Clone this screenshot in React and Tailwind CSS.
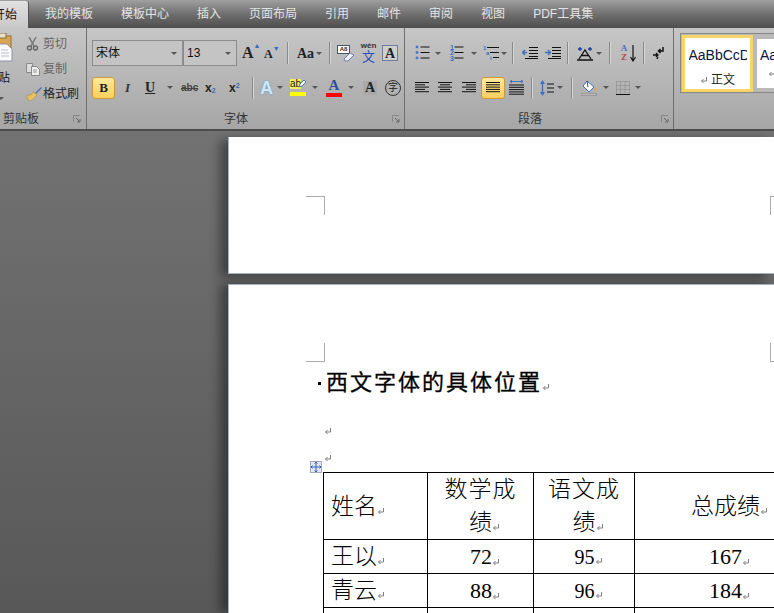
import React from "react";

const Arrow = () => <span className="inline-block w-0 h-0 border-x-[3px] border-x-transparent border-t-[3px] border-t-[#555]" />;
const Sep = ({ className = "" }) => <span className={`w-px h-[22px] bg-[#8a8a8a] border-r border-[#d5d5d5] box-content ${className}`} />;
const Launcher = () => (
  <svg width="8" height="8" viewBox="0 0 8 8" className="shrink-0"><path d="M.5 7V.5H7" fill="none" stroke="#888" /><path d="M3 3l4 4M7 4v3H4" fill="none" stroke="#666" /></svg>
);
const Ret = ({ className = "" }) => (
  <svg width="8" height="8" viewBox="0 0 8 8" className={`inline-block shrink-0 ${className}`}><path d="M6.5 1v4H1.5M3.500 3L1.500 5l2 2" fill="none" stroke="#808080" strokeWidth="1" /></svg>
);
const Lines = ({ kind = "left" }) => {
  const rows = {
    left: [14, 10, 14, 10, 14],
    center: [14, 10, 14, 10, 14],
    right: [14, 10, 14, 10, 14],
    just: [14, 14, 14, 14, 14],
  }[kind];
  return (
    <svg width="14" height="11" viewBox="0 0 14 11">
      {rows.map((w, i) => {
        const x = kind === "center" ? (14 - w) / 2 : kind === "right" ? 14 - w : 0;
        return <rect key={i} x={x} y={i * 2.3} width={w} height="1" fill="#111" />;
      })}
    </svg>
  );
};
const ListIcon = ({ marks }) => (
  <svg width="15" height="16" viewBox="0 0 15 16">
    {[2, 7.5, 13].map((y, i) => (
      <g key={i}>
        {marks === "dot" ? (
          <circle cx="2" cy={y} r="1.4" fill="#4a76c0" />
        ) : (
          <text x="1" y={y + 2.5} fontSize="7" fontWeight="700" fontFamily="Liberation Sans" fill="#3f6fc0">{i + 1}</text>
        )}
        <rect x="5.500" y={y - 0.5} width="9" height="1" fill="#111" />
      </g>
    ))}
  </svg>
);
const MultiIcon = () => (
  <svg width="16" height="16" viewBox="0 0 16 16">
    <text x="0" y="5" fontSize="6" fontWeight="700" fontFamily="Liberation Sans" fill="#3f6fc0">1</text>
    <rect x="4" y="2" width="12" height="1" fill="#111" />
    <text x="3" y="10" fontSize="6" fontWeight="700" fontFamily="Liberation Sans" fill="#3f6fc0">a</text>
    <rect x="7" y="7" width="9" height="1" fill="#111" />
    <text x="7" y="15" fontSize="6" fontWeight="700" fontFamily="Liberation Sans" fill="#3f6fc0">i</text>
    <rect x="10" y="12" width="6" height="1" fill="#111" />
  </svg>
);

const GroupLabel = ({ label, pad, justify }) => (
  <div className={`mt-auto h-[21px] flex items-center ${justify} ${pad} text-[12px] leading-none text-[#333]`}>
    <span>{label}</span>
    <Launcher />
  </div>
);

function Clipboard() {
  return (
    <section className="w-[87px] shrink-0 border-r border-[#6f6f6f] flex flex-col">
      <div className="flex h-[80px]">
        <div className="w-[23px] shrink-0 overflow-hidden flex flex-col">
          <svg width="13" height="30" viewBox="0 0 13 30" className="mt-[5px] shrink-0">
            <rect x="-6" y="3" width="17" height="22" fill="#d9a653" stroke="#9a6f30" />
            <rect x="-4" y="0" width="10" height="5" fill="#e8e0c8" stroke="#85703f" />
            <path d="M-3 11H7l5 5v12H-3z" fill="#fbfbfb" stroke="#8a93a8" />
            <path d="M1 17h7M1 20h8M1 23h8" stroke="#b8bcc8" />
          </svg>
          <span className="text-[12px] leading-[16px] mt-[7px] ml-[-2px] text-[#111]">贴</span>
          <span className="mt-[9px] ml-[-2px] leading-[0]"><Arrow /></span>
        </div>
        <div className="flex flex-col pt-[5px] gap-[4px] ml-[3px]">
          <div className="flex items-center h-[21px]">
            <svg width="13" height="14" viewBox="0 0 13 14"><path d="M3 0l5 9M10 0L5 9" stroke="#777" strokeWidth="1.5" /><circle cx="3.500" cy="11" r="2" fill="none" stroke="#666" strokeWidth="1.4" /><circle cx="9.500" cy="11" r="2" fill="none" stroke="#666" strokeWidth="1.4" /></svg>
            <span className="ml-[4px] text-[12px] text-[#666]">剪切</span>
          </div>
          <div className="flex items-center h-[21px]">
            <svg width="14" height="14" viewBox="0 0 14 14"><path d="M.5 1.500h6v9h-6z" fill="#ddd" stroke="#888" /><path d="M5.500 4.500h5l3 3v6h-8z" fill="#eee" stroke="#888" /><path d="M7 8h4M7 10h4" stroke="#999" /></svg>
            <span className="ml-[3px] text-[12px] text-[#666]">复制</span>
          </div>
          <div className="flex items-center h-[21px]">
            <svg width="16" height="14" viewBox="0 0 16 14"><path d="M9 6l6-6 1 1-6 6z" fill="#5570a8" /><path d="M1 8c3 1 5-1 7-3l3 3c-2 3-5 5-7 6-1 0-1-1-1-1-1 0-1-1-1-1-1 0-1-2-1-4z" fill="#e8c060" stroke="#a08030" strokeWidth=".5" /></svg>
            <span className="ml-[1px] text-[12px] text-[#222]">格式刷</span>
          </div>
        </div>
      </div>
      <GroupLabel label="剪贴板" justify="justify-between" pad="pl-[3px] pr-[5px]" />
    </section>
  );
}

function FontGroup() {
  return (
    <section className="w-[318px] shrink-0 border-r border-[#6f6f6f] flex flex-col">
      <div className="flex items-center h-[26px] mt-[12px] pl-[5px]">
        <div className="w-[91px] h-[26px] border border-[#8c8c8c] bg-[#c4c4c4] flex items-center justify-between pl-[3px] pr-[5px] text-[12px] text-[#111]">
          <span>宋体</span><Arrow />
        </div>
        <div className="w-[54px] h-[26px] border border-[#8c8c8c] bg-[#c4c4c4] flex items-center justify-between pl-[3px] pr-[5px] text-[12px] text-[#111] font-['Liberation_Sans']">
          <span>13</span><Arrow />
        </div>
        <span className="ml-[5px] w-[18px] font-['Liberation_Serif'] font-bold text-[16px] text-[#222] flex items-start">A<span className="text-[7px] text-[#3b6cb5] leading-[10px]">▲</span></span>
        <span className="ml-[4px] w-[18px] font-['Liberation_Serif'] font-bold text-[12px] text-[#222] flex items-start pt-[2px]">A<span className="text-[7px] text-[#3b6cb5] leading-[8px]">▼</span></span>
        <Sep className="ml-[5px]" />
        <span className="ml-[8px] w-[26px] font-['Liberation_Serif'] font-bold text-[14px] text-[#222] flex items-center gap-[2px]">Aa<Arrow /></span>
        <Sep className="ml-[6px]" />
        <div className="ml-[6px] w-[18px] h-[17px] relative">
          <span className="block w-[13px] h-[9px] bg-white border border-[#456] font-['Liberation_Sans'] font-bold text-[6px] leading-[7px] text-center text-[#234]">A8</span>
          <svg width="12" height="10" viewBox="0 0 12 10" className="absolute right-0 bottom-0"><path d="M1 7l6-6 4 2-6 6H2z" fill="#f0f0f8" stroke="#6a7fb0" /></svg>
        </div>
        <div className="ml-[5px] w-[17px] flex flex-col items-center leading-none">
          <span className="font-['Liberation_Sans'] font-bold text-[8px] h-[8px] text-[#333]">wén</span>
          <span className="text-[13px] text-[#2f4fb5] leading-[14px]">文</span>
        </div>
        <span className="ml-[5px] w-[16px] h-[16px] border border-[#6a7f9f] bg-[#cfcfcf] flex items-center justify-center font-['Liberation_Serif'] font-bold text-[14px] text-[#222]">A</span>
      </div>
      <div className="flex items-center h-[23px] mt-[10px] pl-[5px]">
        <span className="w-[23px] h-[22px] rounded-[3px] border border-[#c99a3a] bg-gradient-to-b from-[#fde89a] to-[#fbcf5c] flex items-center justify-center font-['Liberation_Serif'] font-bold text-[13px] text-[#222]">B</span>
        <span className="ml-[10px] w-[10px] font-['Liberation_Serif'] italic font-bold text-[13px] text-[#333]">I</span>
        <span className="ml-[10px] w-[14px] font-['Liberation_Serif'] font-bold underline text-[14px] text-[#222]">U</span>
        <span className="ml-[8px] flex"><Arrow /></span>
        <span className="ml-[8px] w-[17px] font-['Liberation_Sans'] font-bold line-through text-[10px] text-[#444]">abc</span>
        <span className="ml-[7px] w-[14px] font-['Liberation_Sans'] font-bold text-[12px] text-[#222]">x<sub className="text-[7px] text-[#3b6cb5]">2</sub></span>
        <span className="ml-[10px] w-[14px] font-['Liberation_Sans'] font-bold text-[12px] text-[#222]">x<sup className="text-[7px] text-[#3b6cb5]">2</sup></span>
        <Sep className="ml-[9px]" />
        <span className="ml-[6px] w-[17px] font-['Liberation_Sans'] font-bold text-[18px] leading-none text-[#cfe6f7] [text-shadow:0_0_2px_#5aa0d8]">A</span>
        <span className="flex"><Arrow /></span>
        <div className="ml-[7px] w-[16px] flex flex-col relative">
          <span className="font-['Liberation_Sans'] text-[10px] leading-[10px] w-[11px] bg-[#f4ee60] text-[#222]">ab</span>
          <svg width="8" height="9" viewBox="0 0 8 9" className="absolute right-0 top-0"><path d="M1 8l1-3 4-4 2 2-4 4z" fill="#f2f2fa" stroke="#5d74a8" /></svg>
          <span className="mt-[3px] h-[4px] bg-[#ffff00]" />
        </div>
        <span className="ml-[6px] flex"><Arrow /></span>
        <div className="ml-[8px] w-[16px] flex flex-col items-center">
          <span className="font-['Liberation_Serif'] font-bold text-[15px] leading-[13px] text-[#34509a]">A</span>
          <span className="mt-[1px] w-full h-[4px] bg-[#ff0000]" />
        </div>
        <span className="ml-[6px] flex"><Arrow /></span>
        <span className="ml-[9px] w-[14px] h-[14px] bg-[#aaa] flex items-center justify-center font-['Liberation_Serif'] font-bold text-[14px] text-[#222]">A</span>
        <span className="ml-[8px] w-[16px] h-[16px] rounded-full border border-[#333] flex items-center justify-center text-[10px] leading-none text-[#222]">字</span>
      </div>
      <GroupLabel label="字体" justify="justify-between" pad="pl-[137px] pr-[4px]" />
    </section>
  );
}

function ParaGroup() {
  return (
    <section className="w-[269px] shrink-0 border-r border-[#6f6f6f] flex flex-col">
      <div className="flex items-center h-[26px] mt-[12px] pl-[10px]">
        <ListIcon marks="dot" />
        <span className="ml-[5px] flex"><Arrow /></span>
        <span className="ml-[8px] flex"><ListIcon marks="num" /></span>
        <span className="ml-[7px] flex"><Arrow /></span>
        <span className="ml-[6px] flex"><MultiIcon /></span>
        <span className="ml-[2px] flex"><Arrow /></span>
        <Sep className="ml-[5px]" />
        <svg width="16" height="12" viewBox="0 0 16 12" className="ml-[8px]"><path d="M0 5.500h5M3 3L.5 5.500 3 8" fill="none" stroke="#3f6fc0" strokeWidth="1.4" /><path d="M7 .5h9M7 3.500h9M7 6.500h9M7 9.500h9M3 11.500h13" stroke="#111" /></svg>
        <svg width="16" height="12" viewBox="0 0 16 12" className="ml-[7px]"><path d="M0 5.500h5M3 3l2.500 2.500L3 8" fill="none" stroke="#3f6fc0" strokeWidth="1.4" /><path d="M7 .5h9M7 3.500h9M7 6.500h9M7 9.500h9M3 11.500h13" stroke="#111" /></svg>
        <Sep className="ml-[6px]" />
        <svg width="16" height="15" viewBox="0 0 16 15" className="ml-[8px]"><path d="M2 13L8 4l6 9M0 14h16M4 9.500h8" fill="none" stroke="#111" strokeWidth="1.3" /><path d="M1 3h4M3 1v4M11 3h4M13 1v4" stroke="#1b3fa0" strokeWidth="1.3" /></svg>
        <span className="ml-[3px] flex"><Arrow /></span>
        <Sep className="ml-[7px]" />
        <div className="ml-[8px] w-[10px] flex flex-col items-center font-['Liberation_Serif'] font-bold text-[9px] leading-[9px]">
          <span className="text-[#4a70b8]">A</span><span className="text-[#b04a4a]">Z</span>
        </div>
        <svg width="6" height="17" viewBox="0 0 6 17" className="ml-[1px]"><path d="M3 0v15M.5 12L3 16l2.500-4" fill="none" stroke="#111" strokeWidth="1.2" /></svg>
        <Sep className="ml-[7px]" />
        <svg width="11" height="14" viewBox="0 0 11 14" className="ml-[8px]"><path d="M10 1v4H6M7.500 3L5.500 5l2 2" fill="none" stroke="#111" strokeWidth="1.5" /><path d="M0 9h5M3 7l2 2-2 2M4 13l1-2" fill="none" stroke="#111" strokeWidth="1.3" /></svg>
      </div>
      <div className="flex items-center h-[23px] mt-[10px] pl-[10px]">
        <span className="w-[14px] flex"><Lines kind="left" /></span>
        <span className="ml-[9px] w-[14px] flex"><Lines kind="center" /></span>
        <span className="ml-[10px] w-[14px] flex"><Lines kind="right" /></span>
        <span className="ml-[5px] w-[24px] h-[22px] rounded-[3px] border border-[#c99a3a] bg-gradient-to-b from-[#fde89a] to-[#fbcf5c] flex items-center justify-center"><Lines kind="just" /></span>
        <svg width="15" height="15" viewBox="0 0 15 15" className="ml-[4px]"><path d="M1 1.500h13M3 0l-2 1.500L3 3M12 0l2 1.500L12 3" fill="none" stroke="#3f6fc0" /><path d="M0 5h15M0 7.300h15M0 9.600h15M0 11.900h15M0 14.200h15" stroke="#111" /></svg>
        <Sep className="ml-[7px]" />
        <svg width="14" height="16" viewBox="0 0 14 16" className="ml-[7px]"><path d="M2.500 0L0 4h5zM2.500 16L0 12h5z" fill="#3f6fc0" /><rect x="1.800" y="4" width="1.400" height="8" fill="#3f6fc0" /><path d="M7 4h7M7 8h7M7 12h7" stroke="#111" /></svg>
        <span className="ml-[3px] flex"><Arrow /></span>
        <Sep className="ml-[8px]" />
        <svg width="16" height="16" viewBox="0 0 16 16" className="ml-[8px]"><path d="M6 1l7 6-5 5-6-6z" fill="#fff" stroke="#3f6fc0" /><path d="M6 1l1 6" stroke="#445" /><path d="M14 7c1 2 1.500 3 0 4-1-1-1-2 0-4z" fill="#e6a030" /><rect x=".5" y="13.500" width="15" height="2" fill="#bbb" stroke="#999" /></svg>
        <span className="ml-[6px] flex"><Arrow /></span>
        <svg width="14" height="14" viewBox="0 0 14 14" className="ml-[7px]"><path d="M.5.5h13M.5 4.500h13M.5 8.500h13M.5.5v13M4.500.5v13M9 .5v13M13.500.5v13" stroke="#888" strokeDasharray="1 1" fill="none" /><path d="M0 13.500h14" stroke="#111" /></svg>
        <span className="ml-[5px] flex"><Arrow /></span>
      </div>
      <GroupLabel label="段落" justify="justify-between" pad="pl-[113px] pr-[4px]" />
    </section>
  );
}

function Styles() {
  return (
    <section className="flex-1 min-w-0 pt-[5px] pl-[6px]">
      <div className="h-[60px] w-[110px] border border-[#888] bg-[#b9b9b9] flex items-center gap-[4px] pl-px">
        <div className="w-[71px] h-[57px] shrink-0 border-[3px] border-[#f8d568] bg-white flex flex-col items-center overflow-hidden">
          <span className="h-[33px] pt-[7px] w-[58px] overflow-hidden whitespace-nowrap font-['Liberation_Sans'] text-[14px] leading-[20px] text-[#0d1440]">AaBbCcD</span>
          <span className="flex items-center gap-[3px] text-[12px] leading-[16px] mt-[1px] text-[#222]"><Ret />正文</span>
        </div>
        <div className="w-[60px] h-[49px] shrink-0 bg-white flex flex-col pl-[3px] overflow-hidden">
          <span className="pt-[6px] font-['Liberation_Sans'] text-[14px] leading-[20px] text-[#0d1440]">Aa</span>
          <span className="mt-[4px] ml-[8px] flex"><Ret /></span>
        </div>
      </div>
    </section>
  );
}

const Td = ({ children, className = "" }) => (
  <td className={`border border-black p-0 align-middle ${className}`}>{children}</td>
);
const Num = ({ v, size = "text-[22px]" }) => (
  <span className={`inline-flex items-end font-['Liberation_Serif'] ${size} leading-none`}>{v}<Ret className="mb-[2px]" /></span>
);
const Centered = ({ v, size }) => (
  <span className="inline-flex items-end pl-[9px]"><Num v={v} size={size} /></span>
);

export default function App() {
  const tabs = ["我的模板", "模板中心", "插入", "页面布局", "引用", "邮件", "审阅", "视图", "PDF工具集"];
  return (
    <div className="w-[774px] h-[613px] overflow-hidden flex flex-col font-['Liberation_Sans','Noto_Sans_CJK_SC',sans-serif]">
      <header className="h-[28px] shrink-0 bg-gradient-to-b from-[#a0a0a0] via-[#707070] to-[#4e4e4e] flex items-end">
        <div className="w-[29px] h-[27px] shrink-0 rounded-tr-[3px] bg-gradient-to-b from-[#e2e2e2] to-[#c8c8c8] border-r border-[#555] overflow-hidden flex items-center">
          <span className="ml-[-7px] whitespace-nowrap text-[12px] text-[#111]">开始</span>
        </div>
        <nav className="h-[28px] flex items-center gap-[28px] ml-[16px] text-[12px] text-[#e4e4e4] whitespace-nowrap">
          {tabs.map((t) => <span key={t}>{t}</span>)}
        </nav>
      </header>
      <div className="h-[103px] shrink-0 flex bg-gradient-to-b from-[#c6c6c6] to-[#a6a6a6] border-b-2 border-[#4c4c4c]">
        <Clipboard />
        <FontGroup />
        <ParaGroup />
        <Styles />
      </div>
      <main className="flex-1 min-h-0 overflow-hidden bg-gradient-to-b from-[#727272] to-[#585858] pl-[228px] pt-[6px] flex flex-col gap-[10px]">
        <div className="h-[137px] shrink-0 bg-white border-l border-b border-[#a9b1bf] shadow-[-8px_3px_10px_rgba(0,0,0,0.4)] pl-[77px] pt-[59px] flex gap-[445px]">
          <span className="w-[19px] h-[19px] shrink-0 border-t border-r border-[#ababab]" />
          <span className="w-[19px] h-[19px] shrink-0 border-t border-l border-[#ababab]" />
        </div>
        <div className="relative flex-1 min-h-0 bg-white border-l border-t border-[#a9b1bf] shadow-[-8px_0_10px_rgba(0,0,0,0.4)] overflow-hidden text-black">
          <div className="pl-[77px] pt-[58px] flex gap-[445px]">
            <span className="w-[19px] h-[19px] shrink-0 border-b border-r border-[#ababab]" />
            <span className="w-[19px] h-[19px] shrink-0 border-b border-l border-[#ababab]" />
          </div>
          <div className="pl-[89px] mt-[7px] h-[28px] flex items-center text-[22px] leading-[28px] tracking-[2px] font-normal [-webkit-text-stroke:0.3px_black] whitespace-nowrap">
            <span className="w-[3px] h-[3px] bg-black mr-[5px] shrink-0" />
            西文字体的具体位置<Ret className="mt-[8px]" />
          </div>
          <div className="pl-[95px] mt-[30px] h-[8px] flex"><Ret /></div>
          <div className="pl-[95px] mt-[19px] h-[8px] flex"><Ret /></div>
          <span className="absolute left-[81px] top-[176px] w-[12px] h-[12px] border border-[#a0a8b8] bg-[#e6e8f0] flex items-center justify-center">
            <svg width="10" height="10" viewBox="0 0 10 10"><path d="M5 0v10M0 5h10M3.500 1.500L5 0l1.500 1.500M3.500 8.500L5 10l1.500-1.500M1.500 3.500L0 5l1.500 1.500M8.500 3.500L10 5 8.500 6.500" fill="none" stroke="#2f60c0" /></svg>
          </span>
          <table className="ml-[94px] mt-[10px] table-fixed border-collapse w-[620px] text-[23px] leading-[33px] font-light">
            <colgroup>
              <col className="w-[104px]" />
              <col className="w-[106px]" />
              <col className="w-[101px]" />
              <col />
            </colgroup>
            <tbody>
              <tr className="h-[67px]">
                <Td className="pl-[7px]"><span className="inline-flex items-end">姓名<Ret className="mb-[8px]" /></span></Td>
                <Td className="text-center"><div className="tracking-[1px]">数学成</div><div className="inline-flex items-end pl-[8px]">绩<Ret className="mb-[8px]" /></div></Td>
                <Td className="text-center"><div className="tracking-[1px]">语文成</div><div className="inline-flex items-end pl-[8px]">绩<Ret className="mb-[8px]" /></div></Td>
                <Td className="pl-[56px]"><span className="inline-flex items-end">总成绩<Ret className="mb-[8px]" /></span></Td>
              </tr>
              <tr className="h-[34px]">
                <Td className="pl-[7px]"><span className="inline-flex items-end">王以<Ret className="mb-[8px]" /></span></Td>
                <Td className="text-center"><Centered v="72" /></Td>
                <Td className="text-center"><Centered v="95" size="text-[20px]" /></Td>
                <Td className="pl-[74px]"><Num v="167" /></Td>
              </tr>
              <tr className="h-[34px]">
                <Td className="pl-[7px]"><span className="inline-flex items-end">青云<Ret className="mb-[8px]" /></span></Td>
                <Td className="text-center"><Centered v="88" /></Td>
                <Td className="text-center"><Centered v="96" size="text-[20px]" /></Td>
                <Td className="pl-[74px]"><Num v="184" /></Td>
              </tr>
              <tr className="h-[34px]"><Td /><Td /><Td /><Td /></tr>
            </tbody>
          </table>
        </div>
      </main>
    </div>
  );
}
